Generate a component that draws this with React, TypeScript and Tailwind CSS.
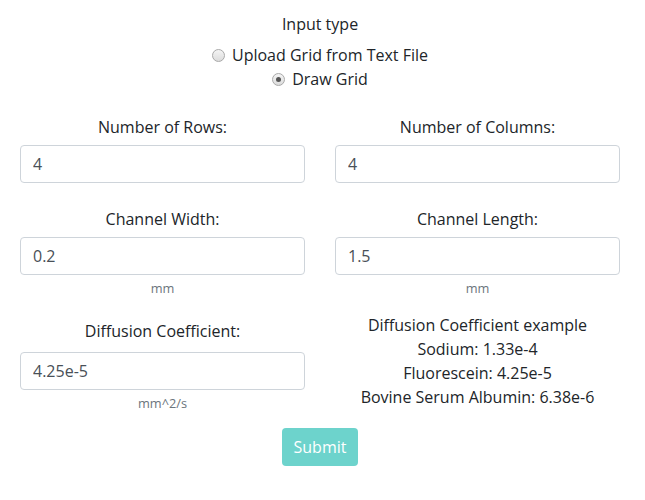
import React, { useState } from 'react';

const FONT = { fontFamily: '"Open Sans", "Liberation Sans", sans-serif' };

function Radio({ checked, label, onClick }: { checked: boolean; label: string; onClick: () => void }) {
  return (
    <label className="flex items-center justify-center gap-[7px] h-6 cursor-pointer" onClick={onClick}>
      <span className="w-[13px] h-[13px] rounded-full border border-[#a9a9a9] bg-gradient-to-b from-[#f4f4f4] to-[#dcdcdc] flex items-center justify-center">
        {checked && <span className="w-[5px] h-[5px] rounded-full bg-[#555]" />}
      </span>
      <span>{label}</span>
    </label>
  );
}

function Field({
  label,
  value,
  unit,
  tall = false,
}: {
  label: string;
  value: string;
  unit?: string;
  tall?: boolean;
}) {
  return (
    <div className={tall ? 'px-[15px] pt-[6px]' : 'px-[15px]'}>
      <div className="text-center leading-6">{label}</div>
      <input
        className={`${tall ? 'mt-[9px]' : 'mt-[6px]'} w-full h-[38px] px-3 border border-[#ced4da] rounded-[4px] text-[#495057] bg-white outline-none`}
        defaultValue={value}
      />
      {unit && (
        <div
          className={`${tall ? 'mt-[4px]' : 'mt-1'} text-center text-[12.8px] leading-[19px] text-[#6c757d]`}
        >
          {unit}
        </div>
      )}
    </div>
  );
}

export default function App() {
  const [mode, setMode] = useState<'upload' | 'draw'>('draw');

  return (
    <div className="w-[630px] ml-[5px] pt-3 text-base text-[#212529] bg-white" style={FONT}>
      <div className="text-center leading-6">Input type</div>
      <div className="mt-[7px]">
        <Radio checked={mode === 'upload'} label="Upload Grid from Text File" onClick={() => setMode('upload')} />
        <Radio checked={mode === 'draw'} label="Draw Grid" onClick={() => setMode('draw')} />
      </div>

      <div className="mt-6 grid grid-cols-2">
        <Field label="Number of Rows:" value="4" />
        <Field label="Number of Columns:" value="4" />
      </div>

      <div className="mt-6 grid grid-cols-2">
        <Field label="Channel Width:" value="0.2" unit="mm" />
        <Field label="Channel Length:" value="1.5" unit="mm" />
      </div>

      <div className="mt-[15px] grid grid-cols-2 items-start">
        <Field label="Diffusion Coefficient:" value="4.25e-5" unit="mm^2/s" tall />
        <div className="px-[15px] text-center leading-6">
          <div>Diffusion Coefficient example</div>
          <div>Sodium: 1.33e-4</div>
          <div>Fluorescein: 4.25e-5</div>
          <div>Bovine Serum Albumin: 6.38e-6</div>
        </div>
      </div>

      <div className="mt-[15px] flex justify-center">
        <button className="h-[38px] px-3 rounded-[4px] bg-[#6dd3cc] text-white leading-6">Submit</button>
      </div>
    </div>
  );
}
